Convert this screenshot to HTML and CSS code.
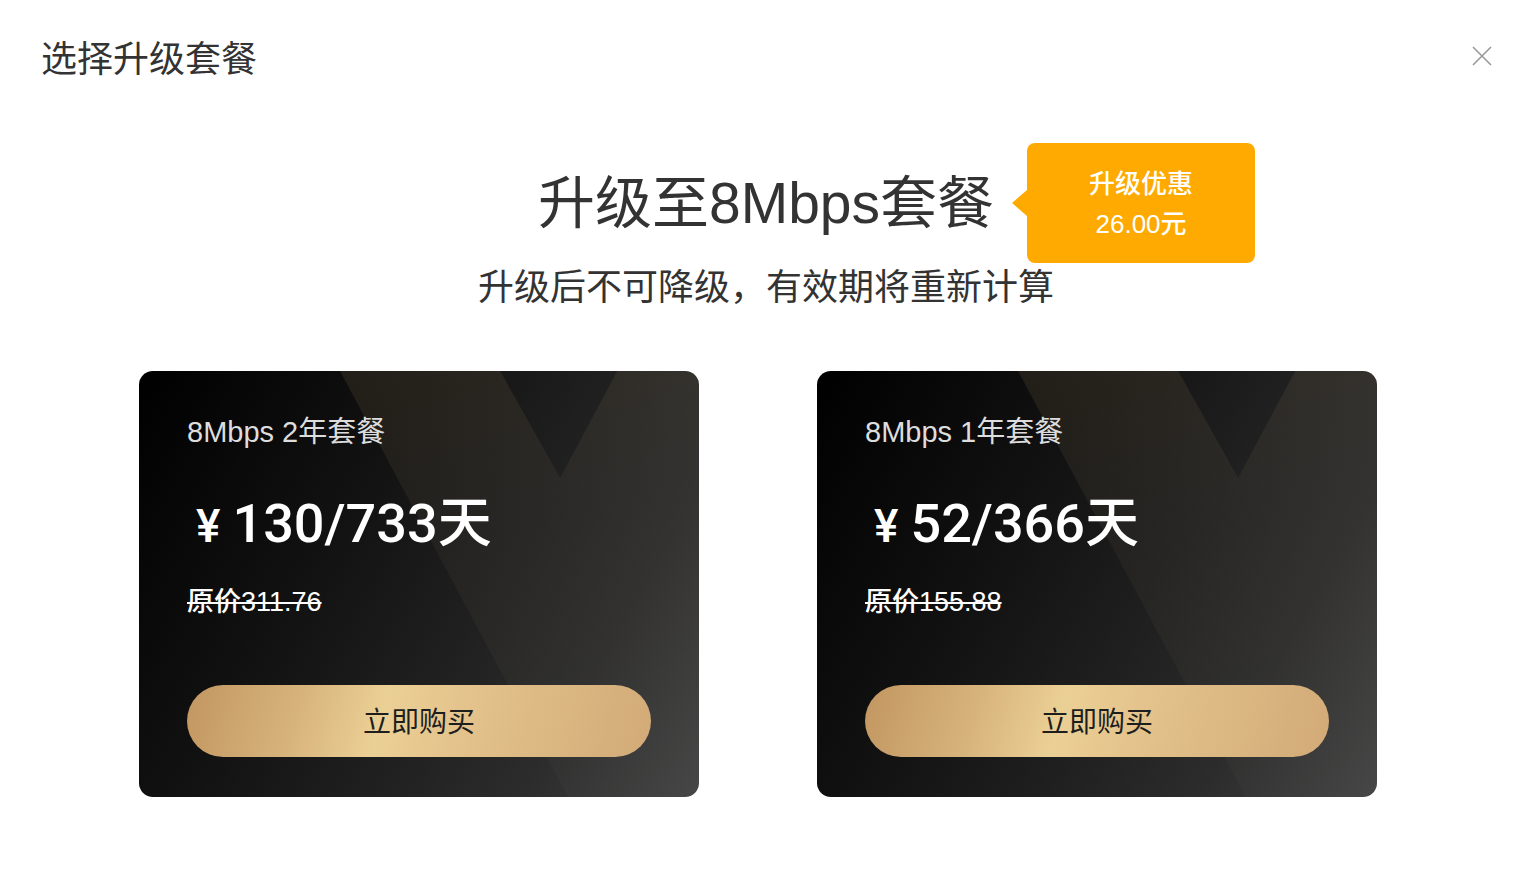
FILE: index.html
```html
<!DOCTYPE html>
<html lang="zh-CN">
<head>
  <meta charset="UTF-8">
  <meta name="viewport" content="width=device-width, initial-scale=1.0">
  <title>选择升级套餐</title>
  <link rel="stylesheet" href="styles.css">
</head>
<body>
  <div class="dialog">
    <!-- En-tête de la fenêtre -->
    <header class="dialog-head">
      <h2 class="dialog-title">选择升级套餐</h2>
      <button class="close" aria-label="关闭">
        <svg viewBox="0 0 20 20" width="20" height="20">
          <path d="M1 1L19 19M19 1L1 19" stroke="#999" stroke-width="1.6" fill="none"/>
        </svg>
      </button>
    </header>

    <!-- Titre et badge -->
    <section class="intro">
      <h1 class="intro-title">
        升级至8Mbps套餐
        <span class="promo">升级优惠<br>26.00元</span>
      </h1>
      <p class="intro-note">升级后不可降级，有效期将重新计算</p>
    </section>

    <!-- Offres -->
    <div class="plans">
      <div class="plan">
        <div class="plan-name">8Mbps 2年套餐</div>
        <div class="plan-price"><span class="yen">¥</span>130/733天</div>
        <div class="plan-old">原价311.76</div>
        <button class="buy">立即购买</button>
      </div>

      <div class="plan">
        <div class="plan-name">8Mbps 1年套餐</div>
        <div class="plan-price"><span class="yen">¥</span>52/366天</div>
        <div class="plan-old">原价155.88</div>
        <button class="buy">立即购买</button>
      </div>
    </div>
  </div>
</body>
</html>
```

FILE: styles.css
```css
/* Style général */
body {
  margin: 0;
  padding: 0;
  background-color: #fff;
  color: #333;
  font-family: "Liberation Sans", "Noto Sans CJK SC", sans-serif;
}

/* En-tête */
.dialog-head {
  display: flex;
  justify-content: space-between;
  align-items: flex-start;
  padding: 42px 40px 0 41px;
}

.dialog-title {
  margin: 0;
  font-size: 36px;
  line-height: 36px;
  font-weight: 400;
  color: #333;
}

.close {
  margin-top: 4px;
  padding: 0;
  width: 20px;
  height: 20px;
  border: none;
  background: none;
  cursor: pointer;
}

.close svg {
  display: block;
}

/* Titre central */
.intro {
  text-align: center;
}

.intro-title {
  position: relative;
  display: inline-block;
  margin: 97px 0 0;
  font-size: 57px;
  line-height: 57px;
  font-weight: 400;
  color: #333;
}

.promo {
  position: absolute;
  left: calc(100% + 33px);
  top: -32px;
  width: 228px;
  height: 120px;
  box-sizing: border-box;
  padding-top: 21px;
  border-radius: 8px;
  background-color: #ffaa00;
  color: #fff;
  font-size: 26px;
  line-height: 40px;
  font-weight: 500;
  text-align: center;
}

.promo::before {
  content: "";
  position: absolute;
  left: -15px;
  top: 47px;
  border-top: 13px solid transparent;
  border-bottom: 13px solid transparent;
  border-right: 15px solid #ffaa00;
}

.intro-note {
  margin: 38px 0 0;
  font-size: 36px;
  line-height: 36px;
  color: #333;
}

/* Cartes des offres */
.plans {
  display: flex;
  justify-content: center;
  gap: 118px;
  margin-top: 65px;
  padding-right: 16px;
}

.plan {
  position: relative;
  overflow: hidden;
  width: 560px;
  height: 426px;
  box-sizing: border-box;
  padding: 47px 48px 40px;
  border-radius: 14px;
  background: linear-gradient(120deg, #000 0%, #121212 36%, #1f1f1f 58%, #2c2c2c 78%, #444 100%);
  color: #fff;
}

/* reflets en V dans le fond */
.plan::before {
  content: "";
  position: absolute;
  inset: 0;
  clip-path: polygon(35.9% 0, 64.5% 0, 75.2% 25.1%, 85.4% 0, 100% 0, 100% 100%, 76.6% 100%);
  background: linear-gradient(165deg, rgba(190, 160, 100, 0.14) 0%, rgba(180, 165, 135, 0.06) 45%, rgba(255, 255, 255, 0.015) 100%);
}

.plan > * {
  position: relative;
}

.plan-name {
  font-size: 29px;
  line-height: 28px;
  color: #ddd;
}

.plan-price {
  margin-top: 51px;
  padding-left: 9px;
  height: 54px;
  font-family: Roboto, "Noto Sans CJK SC", sans-serif;
  font-size: 54px;
  line-height: 54px;
  font-weight: 500;
  color: #fff;
}

.yen {
  margin-right: 12px;
  font-size: 46px;
  line-height: 46px;
}

.plan-old {
  margin-top: 37px;
  font-size: 27px;
  line-height: 28px;
  font-weight: 500;
  color: #fff;
  text-decoration: line-through;
}

.buy {
  display: block;
  margin-top: 69px;
  width: 100%;
  height: 72px;
  padding: 3px 0 0;
  border: none;
  border-radius: 36px;
  background: linear-gradient(105deg, #c29660 0%, #d7b37c 24%, #ebd095 42%, #e3c28b 60%, #dab681 80%, #d2aa77 100%);
  color: #1e1e1e;
  font-family: inherit;
  font-size: 28px;
  line-height: 28px;
  cursor: pointer;
}
```
